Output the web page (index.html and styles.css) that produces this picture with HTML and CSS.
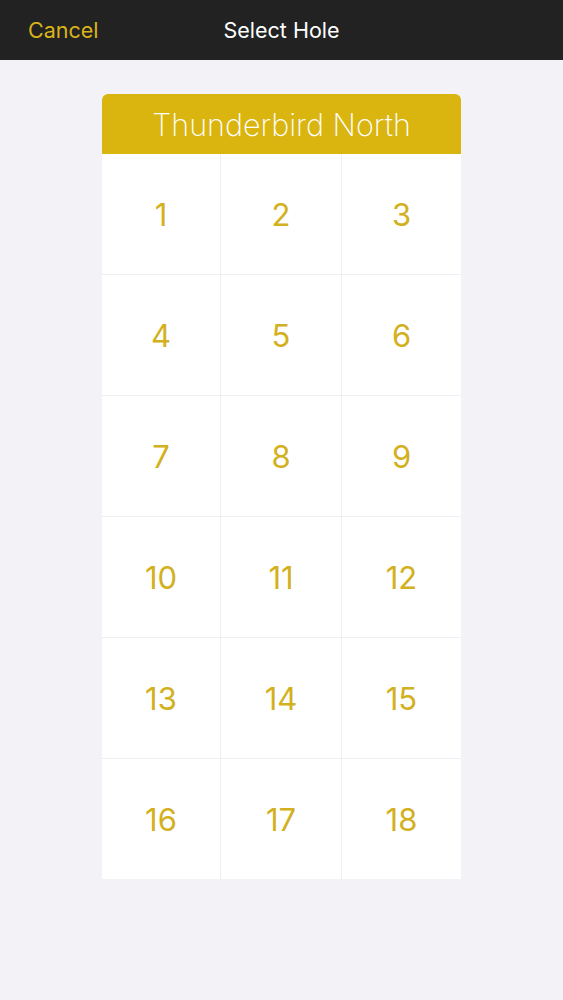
FILE: index.html
```html
<!DOCTYPE html>
<html lang="en">

<head>
    <meta charset="UTF-8">
    <meta name="viewport" content="width=device-width, initial-scale=1.0">
    <title>Select Hole</title>
    <link rel="stylesheet" href="styles.css">
</head>

<body>
    <header class="nav-bar">
        <span class="nav-cancel">Cancel</span>
        <span class="nav-title">Select Hole</span>
        <span class="nav-spacer"></span>
    </header>

    <main class="content">
        <div class="course-card">
            <div class="course-name">Thunderbird North</div>
            <div class="hole-grid">
                <div class="hole">1</div>
                <div class="hole">2</div>
                <div class="hole">3</div>
                <div class="hole">4</div>
                <div class="hole">5</div>
                <div class="hole">6</div>
                <div class="hole">7</div>
                <div class="hole">8</div>
                <div class="hole">9</div>
                <div class="hole">10</div>
                <div class="hole">11</div>
                <div class="hole">12</div>
                <div class="hole">13</div>
                <div class="hole">14</div>
                <div class="hole">15</div>
                <div class="hole">16</div>
                <div class="hole">17</div>
                <div class="hole">18</div>
            </div>
        </div>
    </main>
</body>

</html>
```

FILE: styles.css
```css
body {
    margin: 0;
    font-family: "Inter", "Roboto", sans-serif;
    background-color: #f3f2f7;
    min-height: 1000px;
}

/* Top navigation bar */
.nav-bar {
    height: 60px;
    background-color: #222222;
    display: flex;
    align-items: center;
    justify-content: space-between;
    padding: 0 28px;
}

.nav-cancel {
    width: 90px;
    color: #d9b31a;
    font-size: 21.5px;
}

.nav-title {
    color: #ffffff;
    font-size: 21.5px;
    font-weight: 400;
}

.nav-spacer {
    width: 90px;
}

.content {
    padding-top: 34px;
    display: flex;
    justify-content: center;
}

.course-card {
    width: 359px;
}

.course-name {
    height: 60px;
    background-color: #dab40f;
    border-radius: 6px 6px 0 0;
    color: #ffffff;
    font-size: 30.5px;
    font-weight: 200;
    display: flex;
    align-items: center;
    justify-content: center;
}

/* 3 x 6 hole buttons, separated by 1px hairlines */
.hole-grid {
    display: grid;
    grid-template-columns: 118px 120px 119px;
    grid-auto-rows: 120px;
    gap: 1px;
    background-color: #efeef2;
}

.hole {
    background-color: #ffffff;
    color: #d3b020;
    font-size: 31px;
    display: flex;
    align-items: center;
    justify-content: center;
}
```
